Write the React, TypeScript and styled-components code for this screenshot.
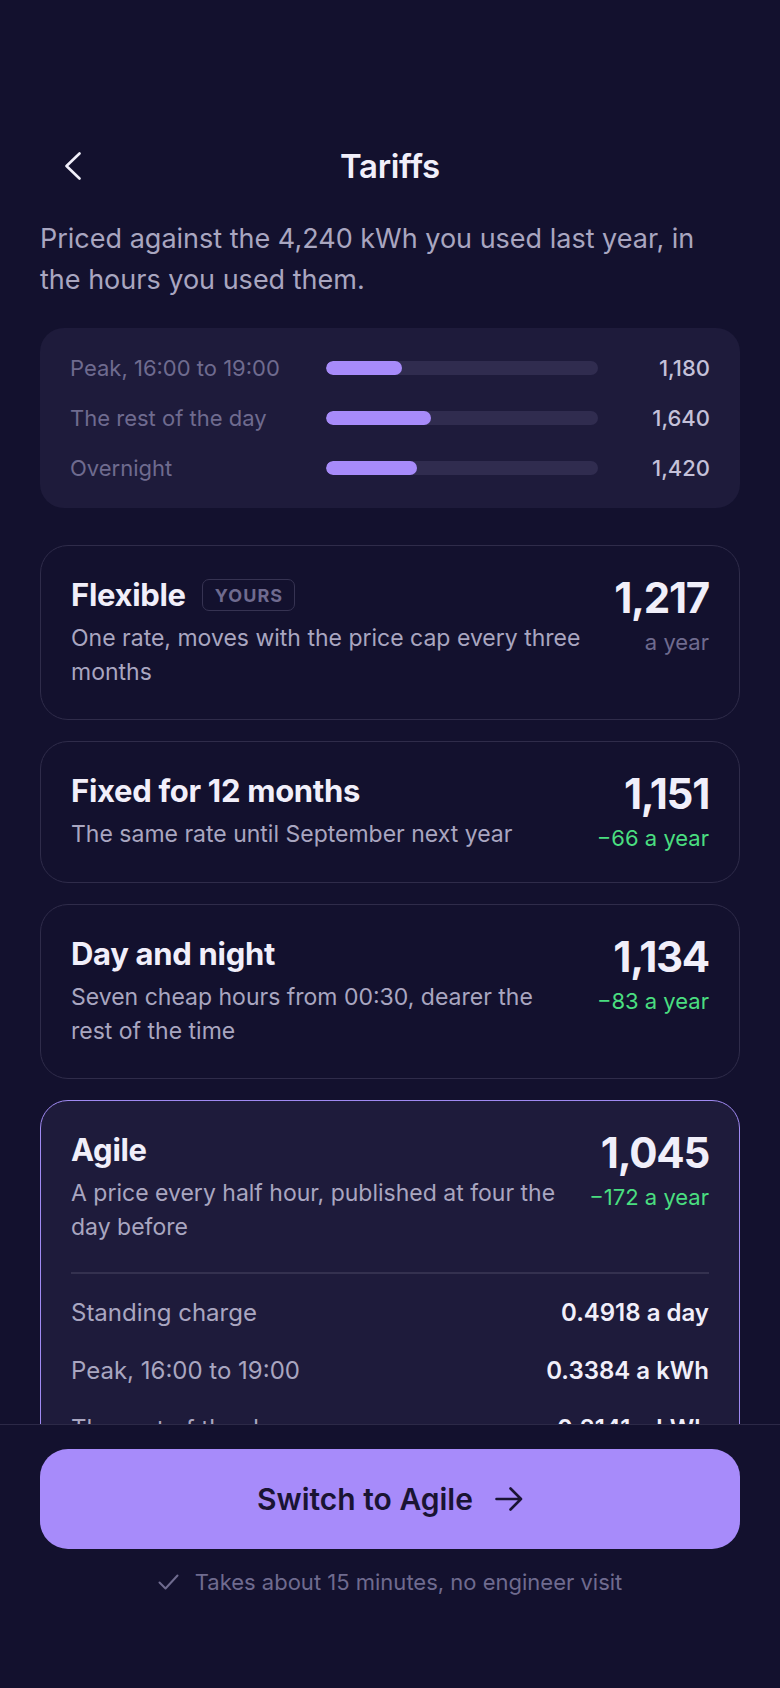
import { createGlobalStyle, styled } from 'styled-components';

const GlobalStyle = createGlobalStyle`
  html, body {
    margin: 0;
    padding: 0;
    background: #13112e;
  }
  body {
    font-family: Inter, "Noto Sans", "Liberation Sans", sans-serif;
    -webkit-font-smoothing: antialiased;
  }
  * { box-sizing: border-box; }
`;

const Screen = styled.div`
  height: 100vh;
  display: flex;
  flex-direction: column;
  background: #13112e;
  color: #f1effa;
  overflow: hidden;
`;

const Scroll = styled.main`
  flex: 1;
  min-height: 0;
  overflow: hidden;
  padding: 138px 40px 0;
`;

const Header = styled.header`
  display: grid;
  grid-template-columns: 64px 1fr 64px;
  align-items: center;
  height: 56px;
`;

const BackButton = styled.button`
  display: flex;
  align-items: center;
  justify-content: flex-start;
  height: 48px;
  padding: 0 0 0 25px;
  border: 0;
  background: none;
  color: #f1effa;
  cursor: pointer;
`;

const Title = styled.h1`
  margin: 0;
  text-align: center;
  font-size: 33px;
  font-weight: 600;
  letter-spacing: -0.01em;
`;

const Intro = styled.p`
  margin: 24px 0 0;
  font-size: 27px;
  line-height: 41px;
  color: #a9a6c0;
`;

const UsagePanel = styled.section`
  margin-top: 28px;
  padding: 25px 30px;
  border-radius: 24px;
  background: #1e1b3b;
  display: flex;
  flex-direction: column;
  gap: 20px;
`;

const UsageRow = styled.div`
  display: grid;
  grid-template-columns: 256px 1fr 112px;
  align-items: center;
  height: 30px;
`;

const UsageLabel = styled.span`
  font-size: 22px;
  color: #6f6b8f;
`;

const Track = styled.div`
  height: 14px;
  border-radius: 7px;
  background: #302c4f;
  overflow: hidden;
`;

const Fill = styled.div`
  height: 100%;
  border-radius: 7px;
  background: #a78bfa;
`;

const UsageValue = styled.span`
  text-align: right;
  font-size: 22px;
  font-weight: 500;
  color: #c4c1d9;
`;

const CardList = styled.div`
  margin-top: 37px;
  display: flex;
  flex-direction: column;
  gap: 21px;
`;

const Card = styled.article<{ $selected?: boolean }>`
  padding: 30px;
  border-radius: 28px;
  border: 1px solid ${(p) => (p.$selected ? '#a08af2' : '#2f2c4a')};
  background: ${(p) => (p.$selected ? '#1e1b3b' : '#13112e')};
`;

const CardTop = styled.div`
  display: flex;
  align-items: flex-start;
  gap: 24px;
`;

const CardText = styled.div`
  flex: 1;
  min-width: 0;
`;

const NameRow = styled.div`
  display: flex;
  align-items: center;
  gap: 16px;
  height: 38px;
`;

const Name = styled.h2`
  margin: 0;
  font-size: 31px;
  font-weight: 700;
  letter-spacing: -0.01em;
  line-height: 38px;
`;

const Badge = styled.span`
  display: inline-flex;
  align-items: center;
  height: 32px;
  padding: 0 11px 0 12px;
  border: 1.5px solid #363352;
  border-radius: 7px;
  font-size: 18px;
  font-weight: 700;
  letter-spacing: 0.06em;
  color: #6f6b8f;
`;

const Description = styled.p`
  margin: 7px 0 0;
  font-size: 23px;
  line-height: 34px;
  color: #a9a6c0;
`;

const PriceCol = styled.div`
  flex-shrink: 0;
  text-align: right;
`;

const Price = styled.div`
  font-size: 42px;
  font-weight: 700;
  line-height: 44px;
  letter-spacing: -0.03em;
`;

const Saving = styled.div<{ $neutral?: boolean }>`
  margin-top: 8px;
  font-size: 22px;
  line-height: 28px;
  color: ${(p) => (p.$neutral ? '#6f6b8f' : '#4ade80')};
`;

const Divider = styled.hr`
  margin: 28px 0 0;
  border: 0;
  border-top: 2px solid #34314f;
`;

const RateList = styled.div`
  padding-top: 22px;
  display: flex;
  flex-direction: column;
  gap: 24px;
`;

const RateRow = styled.div`
  display: flex;
  justify-content: space-between;
  align-items: center;
  font-size: 24px;
  line-height: 34px;
`;

const RateLabel = styled.span`
  color: #a9a6c0;
`;

const RateValue = styled.span`
  font-weight: 600;
  color: #f1effa;
`;

const Footer = styled.footer`
  flex-shrink: 0;
  border-top: 1px solid #2c2947;
  background: #13112e;
  padding: 24px 40px 91px;
  display: flex;
  flex-direction: column;
  align-items: stretch;
`;

const SwitchButton = styled.button`
  height: 100px;
  border: 0;
  border-radius: 28px;
  background: #a78bfa;
  color: #1a1433;
  font-family: inherit;
  font-size: 30px;
  font-weight: 600;
  display: flex;
  align-items: center;
  justify-content: center;
  gap: 22px;
  cursor: pointer;
`;

const Note = styled.p`
  margin: 18px 0 0;
  display: flex;
  align-items: center;
  justify-content: center;
  gap: 16px;
  font-size: 22px;
  line-height: 30px;
  color: #6f6b8f;
`;

const usage = [
  { label: 'Peak, 16:00 to 19:00', kwh: 1180 },
  { label: 'The rest of the day', kwh: 1640 },
  { label: 'Overnight', kwh: 1420 },
];

const total = usage.reduce((s, u) => s + u.kwh, 0);

const tariffs = [
  {
    name: 'Flexible',
    yours: true,
    description: 'One rate, moves with the price cap every three months',
    price: '1,217',
    saving: null as string | null,
  },
  {
    name: 'Fixed for 12 months',
    description: 'The same rate until September next year',
    price: '1,151',
    saving: '−66 a year',
  },
  {
    name: 'Day and night',
    description: 'Seven cheap hours from 00:30, dearer the rest of the time',
    price: '1,134',
    saving: '−83 a year',
  },
];

const agileRates = [
  { label: 'Standing charge', value: '0.4918 a day' },
  { label: 'Peak, 16:00 to 19:00', value: '0.3384 a kWh' },
  { label: 'The rest of the day', value: '0.2141 a kWh' },
  { label: 'Overnight', value: '0.1522 a kWh' },
];

function ChevronLeft() {
  return (
    <svg width="16" height="28" viewBox="0 0 16 28" fill="none">
      <polyline
        points="14.5,1.5 1.5,14 14.5,26.5"
        stroke="currentColor"
        strokeWidth="2.6"
        strokeLinecap="round"
        strokeLinejoin="round"
      />
    </svg>
  );
}

function ArrowRight() {
  return (
    <svg width="28" height="24" viewBox="0 0 28 24" fill="none">
      <path
        d="M1.5 12H26M15.5 1.5L26 12L15.5 22.5"
        stroke="currentColor"
        strokeWidth="2.6"
        strokeLinecap="round"
        strokeLinejoin="round"
      />
    </svg>
  );
}

function CheckMark() {
  return (
    <svg width="21" height="16" viewBox="0 0 21 16" fill="none">
      <path
        d="M1.5 8.5L7.5 14.5L19.5 1.5"
        stroke="currentColor"
        strokeWidth="2"
        strokeLinecap="round"
        strokeLinejoin="round"
      />
    </svg>
  );
}

export default function App() {
  return (
    <>
      <GlobalStyle />
      <Screen>
        <Scroll>
          <Header>
            <BackButton aria-label="Back">
              <ChevronLeft />
            </BackButton>
            <Title>Tariffs</Title>
            <span />
          </Header>

          <Intro>
            Priced against the 4,240 kWh you used last year, in the hours you used them.
          </Intro>

          <UsagePanel>
            {usage.map((u) => (
              <UsageRow key={u.label}>
                <UsageLabel>{u.label}</UsageLabel>
                <Track>
                  <Fill style={{ width: `${(u.kwh / total) * 100}%` }} />
                </Track>
                <UsageValue>{u.kwh.toLocaleString('en-GB')}</UsageValue>
              </UsageRow>
            ))}
          </UsagePanel>

          <CardList>
            {tariffs.map((t) => (
              <Card key={t.name}>
                <CardTop>
                  <CardText>
                    <NameRow>
                      <Name>{t.name}</Name>
                      {t.yours && <Badge>YOURS</Badge>}
                    </NameRow>
                    <Description>{t.description}</Description>
                  </CardText>
                  <PriceCol>
                    <Price>{t.price}</Price>
                    {t.saving ? <Saving>{t.saving}</Saving> : <Saving $neutral>a year</Saving>}
                  </PriceCol>
                </CardTop>
              </Card>
            ))}

            <Card $selected>
              <CardTop>
                <CardText>
                  <NameRow>
                    <Name>Agile</Name>
                  </NameRow>
                  <Description>A price every half hour, published at four the day before</Description>
                </CardText>
                <PriceCol>
                  <Price>1,045</Price>
                  <Saving>−172 a year</Saving>
                </PriceCol>
              </CardTop>
              <Divider />
              <RateList>
                {agileRates.map((r) => (
                  <RateRow key={r.label}>
                    <RateLabel>{r.label}</RateLabel>
                    <RateValue>{r.value}</RateValue>
                  </RateRow>
                ))}
              </RateList>
            </Card>
          </CardList>
        </Scroll>

        <Footer>
          <SwitchButton>
            Switch to Agile
            <ArrowRight />
          </SwitchButton>
          <Note>
            <CheckMark />
            Takes about 15 minutes, no engineer visit
          </Note>
        </Footer>
      </Screen>
    </>
  );
}
